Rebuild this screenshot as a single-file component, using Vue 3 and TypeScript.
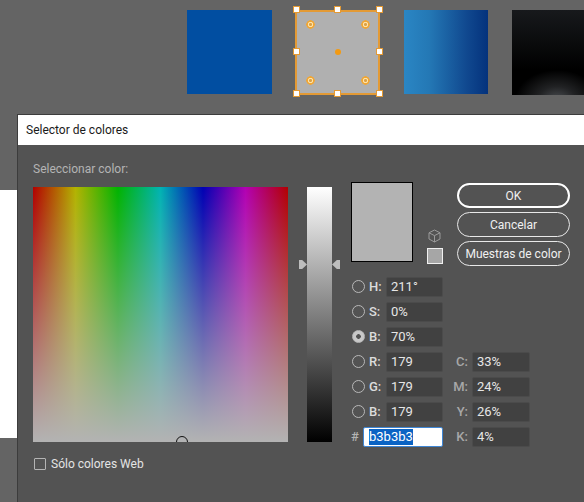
<script setup lang="ts">
interface Field {
  radio: string
  label: string
  value: string
  checked?: boolean
}

const leftFields: Field[] = [
  { radio: 'h', label: 'H:', value: '211°' },
  { radio: 's', label: 'S:', value: '0%' },
  { radio: 'b', label: 'B:', value: '70%', checked: true },
  { radio: 'r', label: 'R:', value: '179' },
  { radio: 'g', label: 'G:', value: '179' },
  { radio: 'b2', label: 'B:', value: '179' }
]

const cmyk = [
  { label: 'C:', value: '33%' },
  { label: 'M:', value: '24%' },
  { label: 'Y:', value: '26%' },
  { label: 'K:', value: '4%' }
]

const handles = ['tl', 'tc', 'tr', 'ml', 'mr', 'bl', 'bc', 'br']
const corners = ['w1', 'w2', 'w3', 'w4']
</script>

<template>
  <div class="page">
    <div class="strip">
      <div class="thumb thumb--blue"></div>
      <div class="thumb thumb--selected">
        <span v-for="h in handles" :key="h" class="handle" :class="h"></span>
        <span v-for="c in corners" :key="c" class="widget" :class="c"></span>
        <span class="center-dot"></span>
      </div>
      <div class="thumb thumb--gradient"></div>
      <div class="thumb thumb--dark"></div>
    </div>

    <div class="lower">
      <div class="side">
        <div class="side__grey"></div>
        <div class="side__white"></div>
        <div class="side__rest"></div>
      </div>

      <div class="dialog">
        <div class="titlebar">Selector de colores</div>
        <div class="body">
          <div class="pick-label">Seleccionar color:</div>
          <div class="main">
            <div class="picker-col">
              <div class="picker">
                <span class="picker__ring"></span>
              </div>
              <label class="web-only">
                <span class="checkbox"></span>
                Sólo colores Web
              </label>
            </div>

            <div class="slider">
              <span class="slider__arrow slider__arrow--left"></span>
              <span class="slider__arrow slider__arrow--right"></span>
            </div>

            <div class="right">
              <div class="right__top">
                <div class="preview"></div>
                <div class="gamut">
                  <svg class="cube" width="13" height="14" viewBox="0 0 13 14" fill="none" stroke="#9a9a9a" stroke-width="1">
                    <path d="M6.5 1 L12 3.8 V10 L6.5 13 L1 10 V3.8 Z" />
                    <path d="M1 3.8 L6.5 6.6 L12 3.8 M6.5 6.6 V13" />
                  </svg>
                  <div class="gamut__swatch"></div>
                </div>
                <div class="buttons">
                  <button class="btn btn--default">OK</button>
                  <button class="btn">Cancelar</button>
                  <button class="btn">Muestras de color</button>
                </div>
              </div>

              <div class="fields">
                <div class="fields__left">
                  <div v-for="f in leftFields" :key="f.radio" class="row">
                    <span class="radio" :class="{ 'radio--on': f.checked }"></span>
                    <span class="row__label">{{ f.label }}</span>
                    <div class="input">{{ f.value }}</div>
                  </div>
                  <div class="row">
                    <span class="hash">#</span>
                    <div class="input input--hex"><span class="selected">b3b3b3</span></div>
                  </div>
                </div>
                <div class="fields__cmyk">
                  <div v-for="c in cmyk" :key="c.label" class="row">
                    <span class="cmyk-label">{{ c.label }}</span>
                    <div class="input input--cmyk">{{ c.value }}</div>
                  </div>
                </div>
              </div>
            </div>
          </div>
        </div>
      </div>
    </div>
  </div>
</template>

<style>
html,
body {
  margin: 0;
  background: #646464;
}
</style>

<style scoped>
.page {
  width: 584px;
  height: 502px;
  display: flex;
  flex-direction: column;
  overflow: hidden;
  background: #646464;
  font-family: Roboto, "Noto Sans", sans-serif;
  font-size: 12px;
}

.strip {
  height: 114px;
  flex: none;
  display: flex;
  gap: 23px;
  padding: 10px 0 0 187px;
  box-sizing: border-box;
}

.thumb {
  width: 85px;
  height: 84px;
  flex: none;
  position: relative;
  box-sizing: border-box;
}

.thumb--blue {
  background: #014ea1;
}

.thumb--selected {
  height: 85px;
  background: #b0b0b0;
  border: 2px solid #e39a35;
}

.thumb--gradient {
  width: 84px;
  margin-left: 1px;
  background: linear-gradient(90deg, #2a86c4 0%, #2478b5 30%, #10488f 75%, #04327c 100%);
}

.thumb--dark {
  margin-left: 1px;
  height: 85px;
  background:
    radial-gradient(ellipse 42px 30px at 45px 90px, #4b4e52 0%, rgba(60, 62, 65, 0.55) 45%, rgba(0, 0, 0, 0) 100%),
    linear-gradient(180deg, #17191c 0%, #0a0b0c 40%, #000 70%);
}

.handle {
  position: absolute;
  width: 7px;
  height: 7px;
  background: #fff;
  border: 1px solid #e39a35;
  box-sizing: border-box;
}

.tl { left: -4px; top: -6px; }
.tc { left: 37px; top: -6px; }
.tr { left: 79px; top: -6px; }
.ml { left: -4px; top: 36px; }
.mr { left: 79px; top: 36px; }
.bl { left: -4px; top: 78px; }
.bc { left: 37px; top: 78px; }
.br { left: 79px; top: 78px; }

.widget {
  position: absolute;
  width: 9px;
  height: 9px;
  border-radius: 50%;
  background: radial-gradient(circle, #d9a24a 0 1.2px, #ffe2a6 1.8px 2.4px, #f0a635 3px 4px, rgba(240, 166, 53, 0) 4.6px);
}

.w1 { left: 9px; top: 8px; }
.w2 { left: 64px; top: 8px; }
.w3 { left: 9px; top: 64px; }
.w4 { left: 64px; top: 64px; }

.center-dot {
  position: absolute;
  left: 38px;
  top: 37px;
  width: 6px;
  height: 6px;
  border-radius: 50%;
  background: #f39a12;
}

.lower {
  flex: 1;
  display: flex;
  min-height: 0;
}

.side {
  width: 17px;
  flex: none;
  display: flex;
  flex-direction: column;
}

.side__grey {
  height: 76px;
}

.side__white {
  height: 248px;
  background: #fff;
}

.side__rest {
  flex: 1;
}

.dialog {
  flex: 1;
  display: flex;
  flex-direction: column;
  border-left: 1px solid #3c3c3c;
  border-top: 1px solid #3c3c3c;
  background: #535353;
}

.titlebar {
  height: 30px;
  flex: none;
  background: #fff;
  color: #1a1a1a;
  padding-left: 8px;
  line-height: 30px;
  white-space: nowrap;
}

.body {
  flex: 1;
  padding: 16px 0 0 15px;
}

.pick-label {
  height: 16px;
  line-height: 16px;
  color: #b4b4b4;
  white-space: nowrap;
}

.main {
  display: flex;
  margin-top: 5px;
}

.picker-col {
  width: 255px;
  flex: none;
  padding-top: 5px;
}

.picker {
  width: 255px;
  height: 255px;
  position: relative;
  overflow: hidden;
  background:
    linear-gradient(180deg, rgba(179, 179, 179, 0) 0%, #b3b3b3 100%),
    linear-gradient(90deg, #b30000 0%, #b3b300 16.67%, #00b300 33.33%, #00b3b3 50%, #0000b3 66.67%, #b300b3 83.33%, #b30000 100%);
}

.picker__ring {
  position: absolute;
  left: 143px;
  top: 249px;
  width: 12px;
  height: 12px;
  box-sizing: border-box;
  border: 1px solid #111;
  border-radius: 50%;
}

.web-only {
  display: flex;
  align-items: center;
  gap: 5px;
  margin: 15px 0 0 1px;
  color: #e4e4e4;
  white-space: nowrap;
}

.checkbox {
  width: 12px;
  height: 12px;
  flex: none;
  box-sizing: border-box;
  border: 1px solid #b4b4b4;
  border-radius: 1px;
}

.slider {
  width: 25px;
  height: 255px;
  flex: none;
  margin: 5px 19px 0 19px;
  position: relative;
  background: linear-gradient(180deg, #fff 0%, #000 100%);
}

.slider__arrow {
  position: absolute;
  top: 73px;
  width: 8px;
  height: 9px;
  background: #bdbdbd;
}

.slider__arrow--left {
  left: -8px;
  clip-path: polygon(0 0, 40% 0, 100% 50%, 40% 100%, 0 100%);
}

.slider__arrow--right {
  right: -8px;
  clip-path: polygon(0 50%, 60% 0, 100% 0, 100% 100%, 60% 100%);
}

.right {
  flex: 1;
  display: flex;
  flex-direction: column;
}

.right__top {
  display: flex;
  height: 95px;
}

.preview {
  width: 62px;
  height: 80px;
  box-sizing: border-box;
  border: 1px solid #000;
  background: #b3b3b3;
  flex: none;
}

.gamut {
  width: 16px;
  margin-left: 14px;
  height: 82px;
  flex: none;
  display: flex;
  flex-direction: column;
  align-items: center;
  justify-content: flex-end;
  gap: 5px;
}

.cube {
  display: block;
  margin-right: 2px;
}

.gamut__swatch {
  width: 16px;
  height: 16px;
  box-sizing: border-box;
  border: 1px solid #f0f0f0;
  background: #a6a6a6;
}

.buttons {
  margin: 1px 0 0 14px;
  display: flex;
  flex-direction: column;
  gap: 4px;
}

.btn {
  width: 113px;
  height: 25px;
  padding: 0;
  box-sizing: border-box;
  border: 1px solid #e8e8e8;
  border-radius: 13px;
  background: transparent;
  color: #f0f0f0;
  font: inherit;
  white-space: nowrap;
}

.btn--default {
  border: 2px solid #fff;
}

.fields {
  display: flex;
}

.fields__left {
  display: flex;
  flex-direction: column;
  gap: 5px;
  width: 92px;
  flex: none;
}

.fields__cmyk {
  display: flex;
  flex-direction: column;
  gap: 5px;
  margin-top: 75px;
  margin-left: 9px;
}

.row {
  height: 20px;
  display: flex;
  align-items: center;
}

.radio {
  width: 13px;
  height: 13px;
  margin: 0 0 2px 1px;
  flex: none;
  box-sizing: border-box;
  border: 1px solid #b8b8b8;
  border-radius: 50%;
}

.radio--on {
  background: radial-gradient(circle, #535353 0 2px, #c8c8c8 2.6px);
}

.row__label {
  width: 21px;
  padding-left: 4px;
  margin-bottom: 2px;
  box-sizing: border-box;
  flex: none;
  font-size: 13px;
  font-weight: 500;
  color: #dcdcdc;
}

.hash {
  width: 12px;
  color: #b4b4b4;
  font-size: 13px;
  font-weight: 500;
  margin-bottom: 2px;
  flex: none;
}

.input {
  width: 57px;
  height: 20px;
  box-sizing: border-box;
  border: 1px solid #4b4b4b;
  border-radius: 2px;
  background: #414141;
  color: #e6e6e6;
  padding-left: 4px;
  line-height: 17px;
  font-size: 13px;
  flex: none;
}

.input--hex {
  width: 80px;
  padding-left: 5px;
  background: #fff;
  border-color: #3f86d4;
  color: #fff;
}

.selected {
  background: #0a63c4;
  display: inline-block;
  line-height: 16px;
}

.cmyk-label {
  width: 16px;
  flex: none;
  text-align: right;
  font-size: 13px;
  font-weight: 500;
  margin-bottom: 2px;
  color: #a8a8a8;
  margin-right: 4px;
}

.input--cmyk {
  width: 58px;
}
</style>
